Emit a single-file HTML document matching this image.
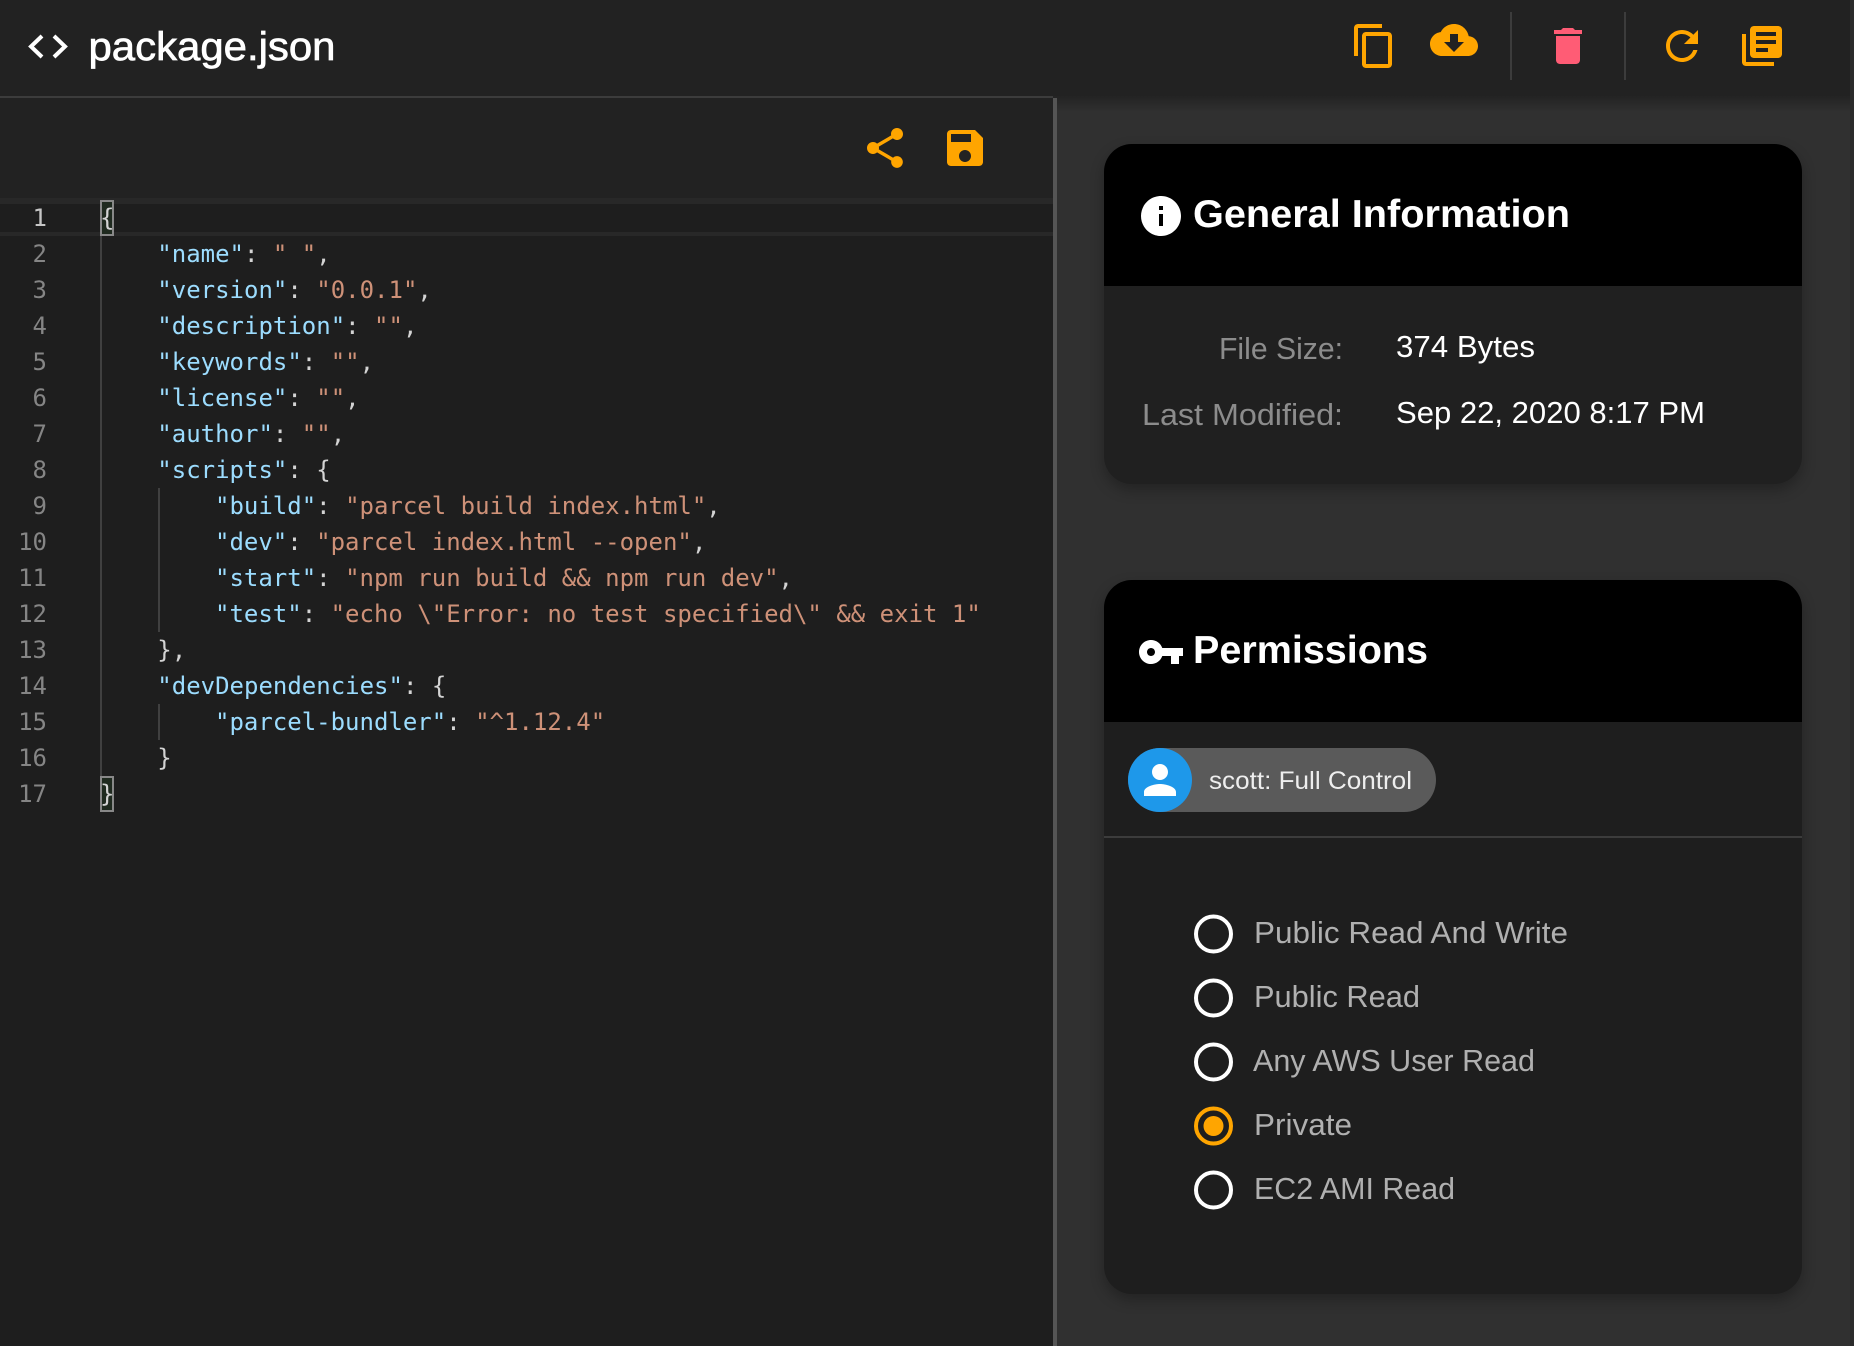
<!DOCTYPE html>
<html><head><meta charset="utf-8"><style>
html,body{margin:0;padding:0;width:1854px;height:1346px;overflow:hidden;background:#303030}
body{position:relative;font-family:"Liberation Sans",sans-serif}
.a{position:absolute}
svg{position:absolute;left:0;top:0}
.c text{font-family:"DejaVu Sans Mono",monospace;font-size:24px;white-space:pre}
.c .n{fill:#858585}
.k{fill:#9cdcfe}.s{fill:#ce9178}.p{fill:#d4d4d4}
.t{font-family:"Liberation Sans",sans-serif}
</style></head><body>
<div class="a" style="left:0;top:96px;width:1854px;height:16px;background:linear-gradient(#232323,#303030)"></div>
<div class="a" style="left:0;top:0;width:1850px;height:96px;background:#222"></div>
<div class="a" style="left:0;top:96px;width:1053px;height:2px;background:#3c3c3c"></div>
<div class="a" style="left:1850px;top:0;width:4px;height:1346px;background:#2b2b2b"></div>
<div class="a" style="left:0;top:98px;width:1053px;height:100px;background:#222"></div>
<div class="a" style="left:0;top:198px;width:1053px;height:1148px;background:#1e1e1e"></div>
<div class="a" style="left:0;top:198px;width:1053px;height:6px;background:#282828"></div>
<div class="a" style="left:0;top:232px;width:1053px;height:4px;background:#282828"></div>
<div class="a" style="left:1053px;top:98px;width:4px;height:1248px;background:#555"></div>
<div class="a" style="left:1510px;top:12px;width:2px;height:68px;background:#3c3c3c"></div>
<div class="a" style="left:1624px;top:12px;width:2px;height:68px;background:#3c3c3c"></div>
<div class="a" style="left:100px;top:236px;width:2px;height:540px;background:#404040"></div>
<div class="a" style="left:158px;top:488px;width:2px;height:144px;background:#404040"></div>
<div class="a" style="left:158px;top:704px;width:2px;height:36px;background:#404040"></div>
<div class="a" style="left:100px;top:200px;width:10px;height:32px;border:2px solid #888;background:#1f2a1f"></div>
<div class="a" style="left:100px;top:776px;width:10px;height:32px;border:2px solid #888;background:#1f2a1f"></div>
<div class="a" style="left:1104px;top:144px;width:698px;height:340px;border-radius:28px;background:#202020;box-shadow:0 6px 14px rgba(0,0,0,.28);overflow:hidden"><div style="height:142px;background:#000"></div></div>
<div class="a" style="left:1104px;top:580px;width:698px;height:714px;border-radius:28px;background:#1e1e1e;box-shadow:0 6px 14px rgba(0,0,0,.28);overflow:hidden"><div style="height:142px;background:#000"></div></div>
<div class="a" style="left:1104px;top:836px;width:698px;height:2px;background:#3c3c3c"></div>
<div class="a" style="left:1128px;top:748px;width:308px;height:64px;border-radius:32px;background:#5a5a5a"></div>
<div class="a" style="left:1128px;top:748px;width:64px;height:64px;border-radius:32px;background:#1e98ea"></div>

<svg width="1854" height="1346" viewBox="0 0 1854 1346" xmlns="http://www.w3.org/2000/svg">
<g fill="none" stroke="#fff" stroke-width="4"><path d="M42 36 31 46.5 42 57M54 36l11 10.5L54 57"/></g>
<text class="t" x="88.5" y="60" font-size="40" fill="#fff" stroke="#fff" stroke-width=".7" textLength="247" lengthAdjust="spacingAndGlyphs">package.json</text>

<g fill="#ffa500">
<path transform="translate(1350 22) scale(2)" d="M16 1H4c-1.1 0-2 .9-2 2v14h2V3h12V1zm3 4H8c-1.1 0-2 .9-2 2v14c0 1.1.9 2 2 2h11c1.1 0 2-.9 2-2V7c0-1.1-.9-2-2-2zm0 16H8V7h11v14z"/>
<path transform="translate(1430 16) scale(2)" d="M19.35 10.04C18.67 6.59 15.64 4 12 4 9.11 4 6.6 5.64 5.35 8.04 2.34 8.36 0 10.91 0 14c0 3.31 2.69 6 6 6h13c2.76 0 5-2.24 5-5 0-2.64-2.05-4.78-4.65-4.96zM17 13l-5 5-5-5h3V9h4v4h3z"/>
<path transform="translate(1658 22) scale(2)" d="M17.65 6.35C16.2 4.9 14.21 4 12 4c-4.42 0-7.99 3.58-7.99 8s3.57 8 7.99 8c3.73 0 6.84-2.55 7.73-6h-2.08c-.82 2.33-3.04 4-5.65 4-3.31 0-6-2.69-6-6s2.69-6 6-6c1.66 0 3.14.69 4.22 1.78L13 11h7V4l-2.35 2.35z"/>
<path transform="translate(1738 22) scale(2)" d="M4 6H2v14c0 1.1.9 2 2 2h14v-2H4V6zm16-4H8c-1.1 0-2 .9-2 2v12c0 1.1.9 2 2 2h12c1.1 0 2-.9 2-2V4c0-1.1-.9-2-2-2zm-1 9H9V9h10v2zm-4 4H9v-2h6v2zm4-8H9V5h10v2z"/>
<path transform="translate(861 124) scale(2)" d="M18 16.08c-.76 0-1.44.3-1.96.77L8.91 12.7c.05-.23.09-.46.09-.7s-.04-.47-.09-.7l7.05-4.11c.54.5 1.25.81 2.04.81 1.66 0 3-1.34 3-3s-1.34-3-3-3-3 1.34-3 3c0 .24.04.47.09.7L8.04 9.81C7.5 9.31 6.79 9 6 9c-1.66 0-3 1.34-3 3s1.34 3 3 3c.79 0 1.5-.31 2.04-.81l7.12 4.16c-.05.21-.08.43-.08.65 0 1.61 1.31 2.92 2.92 2.92 1.61 0 2.92-1.31 2.92-2.92s-1.31-2.92-2.92-2.92z"/>
<path transform="translate(941 124) scale(2)" d="M17 3H5c-1.11 0-2 .9-2 2v14c0 1.1.89 2 2 2h14c1.1 0 2-.9 2-2V7l-4-4zm-5 16c-1.66 0-3-1.34-3-3s1.34-3 3-3 3 1.34 3 3-1.34 3-3 3zm3-10H5V5h10v4z"/>
</g>
<path fill="#ff5c75" transform="translate(1544 22) scale(2)" d="M6 19c0 1.1.9 2 2 2h8c1.1 0 2-.9 2-2V7H6v12zM19 4h-3.5l-1-1h-5l-1 1H5v2h14V4z"/>

<g class="c">
<text class="n" x="47" y="226" text-anchor="end" style="fill:#c6c6c6">1</text>
<text class="n" x="47" y="262" text-anchor="end">2</text>
<text class="n" x="47" y="298" text-anchor="end">3</text>
<text class="n" x="47" y="334" text-anchor="end">4</text>
<text class="n" x="47" y="370" text-anchor="end">5</text>
<text class="n" x="47" y="406" text-anchor="end">6</text>
<text class="n" x="47" y="442" text-anchor="end">7</text>
<text class="n" x="47" y="478" text-anchor="end">8</text>
<text class="n" x="47" y="514" text-anchor="end">9</text>
<text class="n" x="47" y="550" text-anchor="end">10</text>
<text class="n" x="47" y="586" text-anchor="end">11</text>
<text class="n" x="47" y="622" text-anchor="end">12</text>
<text class="n" x="47" y="658" text-anchor="end">13</text>
<text class="n" x="47" y="694" text-anchor="end">14</text>
<text class="n" x="47" y="730" text-anchor="end">15</text>
<text class="n" x="47" y="766" text-anchor="end">16</text>
<text class="n" x="47" y="802" text-anchor="end">17</text>

<text x="100" y="226" class="p">{</text>
<text x="157.3" y="262" class="p"><tspan class="k">"name"</tspan>: <tspan class="s">" "</tspan>,</text>
<text x="157.3" y="298" class="p"><tspan class="k">"version"</tspan>: <tspan class="s">"0.0.1"</tspan>,</text>
<text x="157.3" y="334" class="p"><tspan class="k">"description"</tspan>: <tspan class="s">""</tspan>,</text>
<text x="157.3" y="370" class="p"><tspan class="k">"keywords"</tspan>: <tspan class="s">""</tspan>,</text>
<text x="157.3" y="406" class="p"><tspan class="k">"license"</tspan>: <tspan class="s">""</tspan>,</text>
<text x="157.3" y="442" class="p"><tspan class="k">"author"</tspan>: <tspan class="s">""</tspan>,</text>
<text x="157.3" y="478" class="p"><tspan class="k">"scripts"</tspan>: {</text>
<text x="215" y="514" class="p"><tspan class="k">"build"</tspan>: <tspan class="s">"parcel build index.html"</tspan>,</text>
<text x="215" y="550" class="p"><tspan class="k">"dev"</tspan>: <tspan class="s">"parcel index.html --open"</tspan>,</text>
<text x="215" y="586" class="p"><tspan class="k">"start"</tspan>: <tspan class="s">"npm run build &amp;&amp; npm run dev"</tspan>,</text>
<text x="215" y="622" class="p"><tspan class="k">"test"</tspan>: <tspan class="s">"echo \"Error: no test specified\" &amp;&amp; exit 1"</tspan></text>
<text x="157.3" y="658" class="p">},</text>
<text x="157.3" y="694" class="p"><tspan class="k">"devDependencies"</tspan>: {</text>
<text x="215" y="730" class="p"><tspan class="k">"parcel-bundler"</tspan>: <tspan class="s">"^1.12.4"</tspan></text>
<text x="157.3" y="766" class="p">}</text>
<text x="100" y="802" class="p">}</text>
</g>

<g fill="#fff">
<path transform="translate(1137 192) scale(2)" d="M12 2C6.48 2 2 6.48 2 12s4.48 10 10 10 10-4.48 10-10S17.52 2 12 2zm1 15h-2v-6h2v6zm0-8h-2V7h2v2z"/>
<path transform="translate(1137 628) scale(2)" d="M12.65 10C11.83 7.67 9.61 6 7 6c-3.31 0-6 2.69-6 6s2.69 6 6 6c2.61 0 4.83-1.67 5.65-4H17v4h4v-4h2v-4H12.65zM7 14c-1.1 0-2-.9-2-2s.9-2 2-2 2 .9 2 2-.9 2-2 2z"/>
<path transform="translate(1136 756) scale(2)" d="M12 12c2.21 0 4-1.79 4-4s-1.79-4-4-4-4 1.79-4 4 1.79 4 4 4zm0 2c-2.67 0-8 1.34-8 4v2h16v-2c0-2.66-5.33-4-8-4z"/>
</g>

<text class="t" x="1193" y="227" font-size="39" font-weight="700" fill="#fff" textLength="377" lengthAdjust="spacingAndGlyphs">General Information</text>
<text class="t" x="1193" y="663" font-size="39" font-weight="700" fill="#fff" textLength="235" lengthAdjust="spacingAndGlyphs">Permissions</text>
<text class="t" x="1219" y="359" font-size="31" fill="#8c8c8c" textLength="124" lengthAdjust="spacingAndGlyphs">File Size:</text>
<text class="t" x="1142" y="425" font-size="31" fill="#8c8c8c" textLength="201" lengthAdjust="spacingAndGlyphs">Last Modified:</text>
<text class="t" x="1396" y="357" font-size="31" fill="#fff" textLength="139" lengthAdjust="spacingAndGlyphs">374 Bytes</text>
<text class="t" x="1396" y="423" font-size="31" fill="#fff" textLength="309" lengthAdjust="spacingAndGlyphs">Sep 22, 2020 8:17 PM</text>
<text class="t" x="1209" y="789" font-size="25" fill="#eee" textLength="203" lengthAdjust="spacingAndGlyphs">scott: Full Control</text>

<g fill="none" stroke="#fff" stroke-width="4">
<circle cx="1213.5" cy="934" r="17.5"/><circle cx="1213.5" cy="998" r="17.5"/><circle cx="1213.5" cy="1062" r="17.5"/><circle cx="1213.5" cy="1190" r="17.5"/>
<circle cx="1213.5" cy="1126" r="17.5" stroke="#ffa500"/>
</g>
<circle cx="1213.5" cy="1126" r="10" fill="#ffa500"/>
<g fill="#b0b0b0" font-size="31" class="t">
<text x="1254" y="943" textLength="314" lengthAdjust="spacingAndGlyphs">Public Read And Write</text>
<text x="1254" y="1007" textLength="166" lengthAdjust="spacingAndGlyphs">Public Read</text>
<text x="1253" y="1071" textLength="282" lengthAdjust="spacingAndGlyphs">Any AWS User Read</text>
<text x="1254" y="1135" textLength="98" lengthAdjust="spacingAndGlyphs">Private</text>
<text x="1254" y="1199" textLength="201" lengthAdjust="spacingAndGlyphs">EC2 AMI Read</text>
</g>
</svg>
</body></html>
